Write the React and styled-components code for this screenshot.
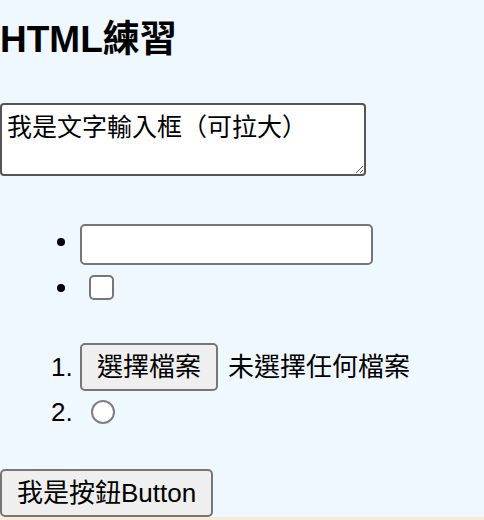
import React from "react";
import styled, { createGlobalStyle } from "styled-components";

const Global = createGlobalStyle`
  html { background: #fbead3; }
  body {
    margin: 0;
    padding: 0;
    background: #f0f8ff;
    font-family: "Liberation Sans", "Noto Sans CJK TC", sans-serif;
    font-size: 26px;
    color: #000;
  }
`;

const Page = styled.main`
  display: flow-root;
  padding-top: 19px;
`;

const Heading = styled.h2`
  margin: 0;
  font-size: 37px;
  line-height: 41px;
  font-weight: bold;
`;

const TextBox = styled.textarea`
  display: block;
  margin: 43px 0 0;
  box-sizing: border-box;
  width: 366px;
  height: 73px;
  padding: 7px 5px 3px;
  border: 2px solid #555;
  border-radius: 4px;
  background: #fff;
  color: #000;
  font-family: "Liberation Sans", "Noto Sans CJK TC", sans-serif;
  font-size: 25px;
  line-height: 30px;
  resize: both;
`;

const Bullets = styled.ul`
  margin: 48px 0 0;
  padding-left: 80px;
  list-style: disc;
`;

const Numbers = styled.ol`
  margin: 33px 0 0;
  padding-left: 80px;
`;

const Item = styled.li`
  line-height: ${(p) => p.$lh}px;
`;

const TextInput = styled.input`
  box-sizing: border-box;
  vertical-align: top;
  width: 293px;
  height: 41px;
  margin: 0;
  padding: 0 6px;
  border: 2px solid #767676;
  border-radius: 5px;
  background: #fff;
  font: inherit;
`;

const Check = styled.input`
  appearance: none;
  box-sizing: border-box;
  vertical-align: top;
  width: 25px;
  height: 25px;
  margin: 10px 0 0 9px;
  border: 2px solid #767676;
  border-radius: 5px;
  background: #fff;
`;

const Radio = styled.input`
  appearance: none;
  box-sizing: border-box;
  vertical-align: top;
  width: 24px;
  height: 24px;
  margin: 9px 0 0 11px;
  border: 2px solid #808080;
  border-radius: 50%;
  background: #fff;
`;

const Btn = styled.button`
  box-sizing: border-box;
  height: 48px;
  padding: 0 15px;
  border: 2px solid #767676;
  border-radius: 5px;
  background: #efefef;
  color: #000;
  font-family: "Liberation Sans", "Noto Sans CJK TC", sans-serif;
  font-size: 26px;
  line-height: 44px;
  vertical-align: top;
  margin: ${(p) => p.$margin || "0"};
  display: ${(p) => (p.$block ? "block" : "inline-block")};
`;

const Hint = styled.span`
  color: #000;
`;

export default function App() {
  return (
    <>
      <Global />
      <Page>
        <Heading>HTML練習</Heading>
        <TextBox defaultValue="我是文字輸入框（可拉大）" />
        <Bullets>
          <Item $lh={35}>
            <TextInput type="text" />
          </Item>
          <Item $lh={45}>
            <Check type="checkbox" />
          </Item>
        </Bullets>
        <Numbers>
          <Item $lh={48}>
            <Btn type="button" $margin="0 10px 0 0">選擇檔案</Btn>
            <Hint>未選擇任何檔案</Hint>
          </Item>
          <Item $lh={43}>
            <Radio type="radio" name="r" />
          </Item>
        </Numbers>
        <Btn type="button" $block $margin="35px 0 0">我是按鈕Button</Btn>
      </Page>
    </>
  );
}
